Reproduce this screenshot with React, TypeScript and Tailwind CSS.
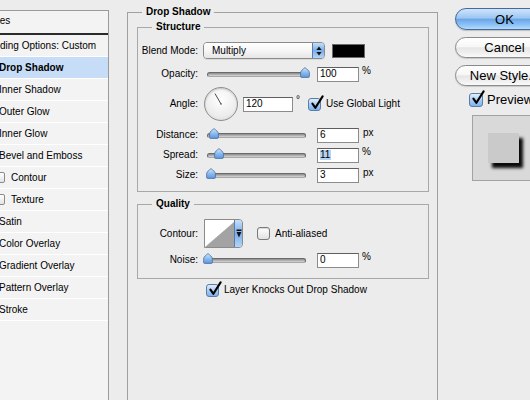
import React from "react";

function CheckMark() {
  return (
    <svg className="absolute left-[1px] top-[-4px] w-[14px] h-[15px] pointer-events-none" viewBox="0 0 14 15">
      <path d="M2.4 8.6 L5.4 12.8 L12.6 1.4" fill="none" stroke="#000" strokeWidth="2.1" strokeLinecap="round" strokeLinejoin="round" />
    </svg>
  );
}

function CheckedBox({ big }: { big?: boolean }) {
  return (
    <span
      className={
        big
          ? "relative inline-block w-[14px] h-[14px] shrink-0 rounded-[3px] border border-[#5b7ca6] bg-linear-to-b from-[#e2effc] via-[#a9cdf4] to-[#7db3ec]"
          : "relative inline-block w-[13px] h-[13px] shrink-0 rounded-[3px] border border-[#5b7ca6] bg-linear-to-b from-[#e2effc] via-[#a9cdf4] to-[#7db3ec]"
      }
    >
      <CheckMark />
    </span>
  );
}

function EmptyBox() {
  return (
    <span className="inline-block w-[13px] h-[13px] shrink-0 rounded-[3px] border border-[#7a7a7a] bg-linear-to-b from-[#ffffff] to-[#e2e2e2] shadow-[inset_0_1px_1px_rgba(0,0,0,0.15)]" />
  );
}

function SmallBox() {
  return (
    <span className="inline-block w-[11px] h-[11px] shrink-0 rounded-[2px] border border-[#8a8a8a] bg-linear-to-b from-[#ffffff] to-[#e4e4e4]" />
  );
}

function Slider({ pos }: { pos: number }) {
  return (
    <div className="relative ml-[6px] w-[105px] h-[16px] flex items-center shrink-0">
      <div className="mx-[3px] flex-1 h-[5px] rounded-full border border-[#6a6a6a] border-b-[#a8a8a8] bg-linear-to-b from-[#8a8a8a] to-[#d8d8d8]" />
      <svg className="absolute top-[1px] w-[10px] h-[11px]" style={{ left: pos - 5 }} viewBox="0 0 10 11">
        <defs>
          <linearGradient id="thumbG" x1="0" y1="0" x2="0" y2="1">
            <stop offset="0" stopColor="#d3e6fb" />
            <stop offset="0.5" stopColor="#8cbcf0" />
            <stop offset="1" stopColor="#5b97de" />
          </linearGradient>
        </defs>
        <path
          d="M5 0.6 C6.8 2 9.4 3.8 9.4 5.8 L9.4 9.4 Q9.4 10.4 8.4 10.4 L1.6 10.4 Q0.6 10.4 0.6 9.4 L0.6 5.8 C0.6 3.8 3.2 2 5 0.6 Z"
          fill="url(#thumbG)"
          stroke="#4d6d9a"
          strokeWidth="0.8"
        />
      </svg>
    </div>
  );
}

function Field({ value, wide, sel }: { value: string; wide?: boolean; sel?: boolean }) {
  return (
    <div
      className={
        wide
          ? "w-[50px] h-[15px] shrink-0 bg-white border border-[#8c8c8c] border-t-[#5e5e5e] flex items-center pl-[2px] leading-none"
          : "w-[42px] h-[15px] shrink-0 bg-white border border-[#8c8c8c] border-t-[#5e5e5e] flex items-center pl-[2px] leading-none"
      }
    >
      {sel ? <span className="bg-[#b4d2f3] pr-[1px]">{value}</span> : value}
    </div>
  );
}

function Label({ text }: { text: string }) {
  return <div className="w-[60px] shrink-0 text-right whitespace-nowrap">{text}</div>;
}

function SliderRow({ label, pos, value, unit, sel, first }: { label: string; pos: number; value: string; unit: string; sel?: boolean; first?: boolean }) {
  return (
    <div className={first ? "mt-[6px] h-[16px] flex items-center" : "mt-[4px] h-[16px] flex items-center"}>
      <Label text={label} />
      <Slider pos={pos} />
      <div className="ml-[8px]">
        <Field value={value} sel={sel} />
      </div>
      <span className={unit === "%" ? "ml-[3px] self-start -mt-[1px]" : "ml-[4px] self-start"}>{unit}</span>
    </div>
  );
}

function Arrows() {
  return (
    <svg className="w-[6px] h-[10px]" viewBox="0 0 6 10">
      <path d="M3 0.5 L5.6 4 L0.4 4 Z" fill="#111" />
      <path d="M3 9.5 L5.6 6 L0.4 6 Z" fill="#111" />
    </svg>
  );
}

const listItems = [
  "Inner Shadow",
  "Outer Glow",
  "Inner Glow",
  "Bevel and Emboss",
  "Contour",
  "Texture",
  "Satin",
  "Color Overlay",
  "Gradient Overlay",
  "Pattern Overlay",
  "Stroke",
];

function LeftPanel() {
  return (
    <div className="w-[109px] shrink-0 mt-[10px] border-t border-r border-[#9a9a9a] bg-[#f3f3f3] overflow-hidden">
      <div className="h-[24px] pb-[3px] flex items-center border-b-2 border-[#2a2a2a] whitespace-nowrap">
        <span className="-ml-[17px]">Styles</span>
      </div>
      <div className="h-[22px] flex items-center border-b border-white whitespace-nowrap">
        <span className="-ml-[20px]">Blending Options: Custom</span>
      </div>
      <div className="h-[22px] flex items-center border-b border-white bg-[#c6dcf7] font-bold whitespace-nowrap">
        <span className="-ml-[1px]">Drop Shadow</span>
      </div>
      {listItems.map((t) => (
        <div key={t} className="h-[22px] flex items-center border-b border-white whitespace-nowrap">
          {t === "Contour" || t === "Texture" ? (
            <>
              <span className="-ml-[6px] flex">
                <SmallBox />
              </span>
              <span className="ml-[6px]">{t}</span>
            </>
          ) : (
            <span className="-ml-[1px]">{t}</span>
          )}
        </div>
      ))}
    </div>
  );
}

function Main() {
  return (
    <fieldset className="ml-[18px] mt-[6px] w-[311px] h-[420px] shrink-0 border border-[#a0a0a0] p-0 m-0">
      <legend className="ml-[14px] px-[4px] font-bold leading-[12px]">Drop Shadow</legend>
      <div className="pl-[9px] pr-[8px]">
        <fieldset className="mt-[3px] w-[292px] border border-[#a8a8a8] p-0 pb-[8px]">
          <legend className="ml-[14px] px-[4px] font-bold leading-[12px]">Structure</legend>
          <div className="mt-[9px] h-[17px] flex items-center">
            <Label text="Blend Mode:" />
            <div className="ml-[5px] w-[122px] h-[17px] flex rounded-[4px] border border-[#8b8b8b] overflow-hidden shadow-[0_1px_0_rgba(0,0,0,0.08)]">
              <div className="flex-1 flex items-center pl-[8px] bg-linear-to-b from-white via-[#f6f6f6] to-[#e6e6e6]">Multiply</div>
              <div className="w-[12px] border-l border-[#5a7cad] bg-linear-to-b from-[#c6def8] via-[#7aaee9] to-[#b2d5f8] flex items-center justify-center">
                <Arrows />
              </div>
            </div>
            <div className="ml-[7px] w-[33px] h-[14px] bg-black border border-[#6a6a6a]" />
          </div>
          <div className="mt-[7px] h-[16px] flex items-center">
            <Label text="Opacity:" />
            <Slider pos={101} />
            <div className="ml-[8px]">
              <Field value="100" />
            </div>
            <span className="ml-[3px] self-start -mt-[1px]">%</span>
          </div>
          <div className="mt-[5px] h-[34px] flex items-center">
            <Label text="Angle:" />
            <div className="relative ml-[6px] w-[34px] h-[34px] shrink-0 rounded-full border border-[#8f8f8f] bg-[radial-gradient(circle_at_50%_35%,#ffffff,#ececec_65%,#d2d2d2)] shadow-[inset_0_1px_2px_rgba(0,0,0,0.2)]">
              <svg className="absolute inset-0 w-[32px] h-[32px]" viewBox="0 0 32 32">
                <line x1="16" y1="16" x2="10" y2="5.6" stroke="#4a4a4a" strokeWidth="1" />
                <circle cx="16" cy="16" r="0.8" fill="#4a4a4a" />
              </svg>
            </div>
            <div className="ml-[5px]">
              <Field value="120" wide />
            </div>
            <span className="ml-[3px] w-[9px] self-start mt-[8px] leading-none">°</span>
            <div className="ml-[3px] flex">
              <CheckedBox />
            </div>
            <span className="ml-[5px] whitespace-nowrap">Use Global Light</span>
          </div>
          <SliderRow label="Distance:" pos={9.5} value="6" unit="px" first />
          <SliderRow label="Spread:" pos={14.5} value="11" unit="%" sel />
          <SliderRow label="Size:" pos={6.5} value="3" unit="px" />
        </fieldset>

        <fieldset className="mt-[6px] w-[292px] border border-[#a8a8a8] p-0 pb-[10px]">
          <legend className="ml-[14px] px-[4px] font-bold leading-[12px]">Quality</legend>
          <div className="mt-[9px] h-[29px] flex items-center">
            <Label text="Contour:" />
            <div className="ml-[6px] w-[39px] h-[29px] shrink-0 flex border border-[#8b8b8b] rounded-r-[4px] overflow-hidden">
              <svg className="w-[29px] h-[27px]" viewBox="0 0 29 27" preserveAspectRatio="none">
                <rect width="29" height="27" fill="#ffffff" />
                <polygon points="0,27 29,2 29,27" fill="#a3a3a3" />
              </svg>
              <div className="flex-1 border-l border-[#5a7cad] bg-linear-to-b from-[#c6def8] via-[#7aaee9] to-[#b2d5f8] flex items-center justify-center">
                <svg className="w-[6px] h-[9px]" viewBox="0 0 6 9">
                  <rect x="0.5" y="0.5" width="5" height="1.5" fill="#111" />
                  <path d="M3 8.5 L5.4 3 L0.6 3 Z" fill="#111" />
                </svg>
              </div>
            </div>
            <div className="ml-[14px] flex">
              <EmptyBox />
            </div>
            <span className="ml-[5px] whitespace-nowrap">Anti-aliased</span>
          </div>
          <div className="mt-[4px] h-[16px] flex items-center">
            <Label text="Noise:" />
            <Slider pos={3.5} />
            <div className="ml-[8px]">
              <Field value="0" />
            </div>
            <span className="ml-[3px] self-start -mt-[1px]">%</span>
          </div>
        </fieldset>
      </div>
      <div className="mt-[4px] h-[14px] pl-[78px] flex items-center">
        <CheckedBox />
        <span className="ml-[5px] whitespace-nowrap">Layer Knocks Out Drop Shadow</span>
      </div>
    </fieldset>
  );
}

function Right() {
  return (
    <div className="ml-[17px] w-[100px] shrink-0 pt-[8px] text-[13px]">
      <div className="h-[22px] w-[99px] rounded-full border border-[#44699f] bg-[linear-gradient(180deg,#cfe4fb_0%,#9cc6f2_45%,#6aa6e9_52%,#8fc3f5_80%,#b5dafb_100%)] flex items-center justify-center shadow-[0_1px_1px_rgba(0,0,0,0.2)] leading-none">
        OK
      </div>
      <div className="mt-[7px] h-[21px] w-[99px] rounded-full border border-[#8a8a8a] bg-[linear-gradient(180deg,#ffffff_0%,#f7f7f7_45%,#e6e6e6_52%,#f2f2f2_85%,#fbfbfb_100%)] flex items-center justify-center shadow-[0_1px_1px_rgba(0,0,0,0.15)] leading-none">
        Cancel
      </div>
      <div className="mt-[7px] h-[21px] w-[99px] rounded-full border border-[#8a8a8a] bg-[linear-gradient(180deg,#ffffff_0%,#f7f7f7_45%,#e6e6e6_52%,#f2f2f2_85%,#fbfbfb_100%)] flex items-center justify-center shadow-[0_1px_1px_rgba(0,0,0,0.15)] leading-none whitespace-nowrap">
        New Style...
      </div>
      <div className="mt-[6px] h-[15px] pl-[14px] flex items-center">
        <CheckedBox big />
        <span className="ml-[4px] whitespace-nowrap">Preview</span>
      </div>
      <div className="mt-[8px] ml-[17px] w-[80px] h-[66px] border border-[#a3a3a3] bg-[#d9d9d9] pt-[17px] pl-[15px]">
        <div className="w-[31px] h-[30px] bg-[#cacaca] shadow-[4px_5px_3px_rgba(0,0,0,0.95)]" />
      </div>
    </div>
  );
}

export default function App() {
  return (
    <div className="w-[530px] h-[400px] bg-[#ececec] flex overflow-hidden font-['Liberation_Sans',Arial,sans-serif] text-[10px] leading-[12px] text-black">
      <LeftPanel />
      <Main />
      <Right />
    </div>
  );
}
